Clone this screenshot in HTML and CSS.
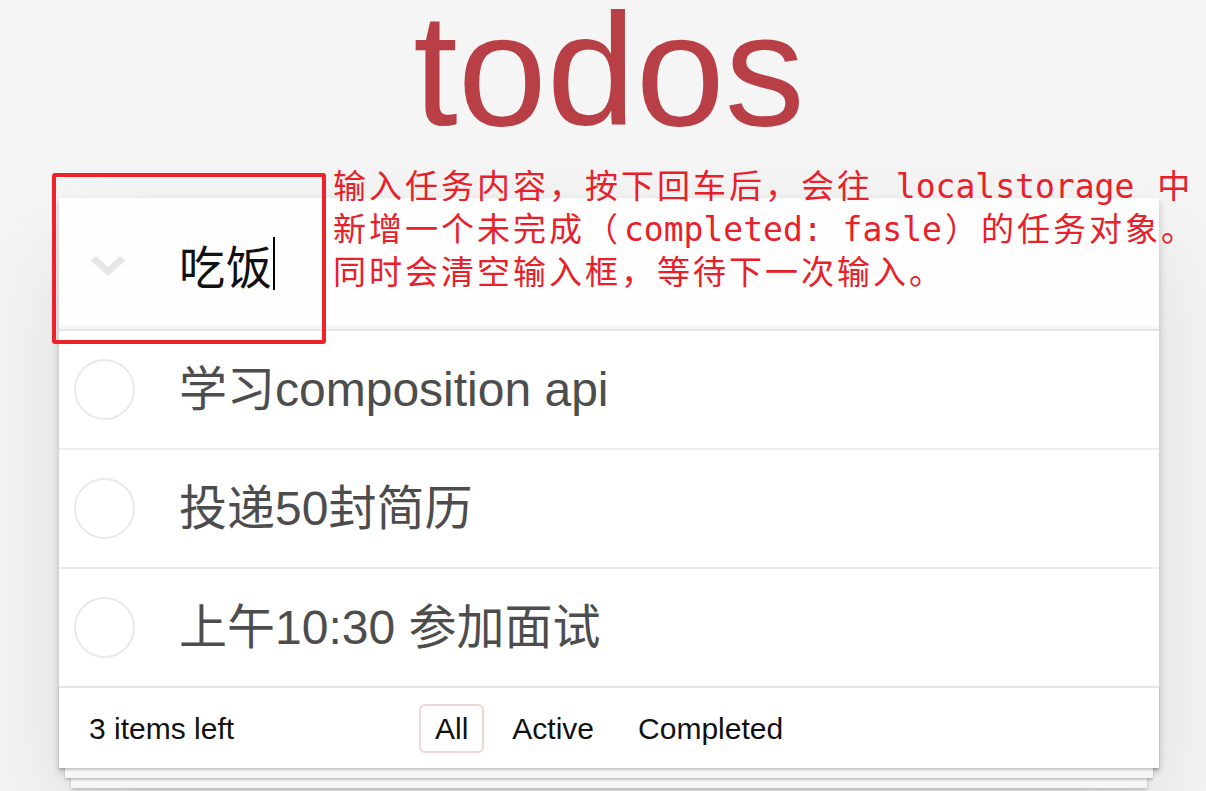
FILE: index.html
```html
<!DOCTYPE html>
<html lang="zh-CN">
<head>
<meta charset="utf-8">
<title>todos</title>
<link rel="stylesheet" href="styles.css">
</head>
<body>
<div class="page">
  <h1 class="title">todos</h1>
  <section class="todoapp">
    <header class="new-todo">
      <span class="toggle-all">
        <svg width="34" height="20" viewBox="0 0 34 20"><polygon points="0,5 5,0 17,11 29,0 34,5 17,20" fill="#e6e6e6"/></svg>
      </span>
      <span class="new-text">吃饭</span><span class="caret"></span>
    </header>
    <ul class="todo-list">
      <li class="todo">
        <span class="toggle"><svg width="61" height="61" viewBox="0 0 61 61"><circle cx="30.5" cy="30.5" r="29.5" fill="none" stroke="#e9e9e9" stroke-width="2"/></svg></span>
        <label class="todo-text">学习composition api</label>
      </li>
      <li class="todo">
        <span class="toggle"><svg width="61" height="61" viewBox="0 0 61 61"><circle cx="30.5" cy="30.5" r="29.5" fill="none" stroke="#e9e9e9" stroke-width="2"/></svg></span>
        <label class="todo-text">投递50封简历</label>
      </li>
      <li class="todo">
        <span class="toggle"><svg width="61" height="61" viewBox="0 0 61 61"><circle cx="30.5" cy="30.5" r="29.5" fill="none" stroke="#e9e9e9" stroke-width="2"/></svg></span>
        <label class="todo-text">上午10:30 参加面试</label>
      </li>
    </ul>
    <footer class="footer">
      <span class="count">3 items left</span>
      <ul class="filters">
        <li><a class="filter selected">All</a></li>
        <li><a class="filter">Active</a></li>
        <li><a class="filter">Completed</a></li>
      </ul>
    </footer>
  </section>
  <div class="highlight"></div>
  <p class="note">输入任务内容，按下回车后，会往<code class="mono"> localstorage </code>中<br>新增一个未完成（<code class="mono">completed: fasle</code>）的任务对象。<br>同时会清空输入框，等待下一次输入。</p>
</div>
</body>
</html>
```

FILE: styles.css
```css
html, body {
  margin: 0;
  padding: 0;
}

body {
  width: 1206px;
  height: 791px;
  overflow: hidden;
  background: #f5f5f5;
  font-family: "Liberation Sans", "Noto Sans CJK SC", sans-serif;
  color: #111;
}

.page {
  position: relative;
  width: 1100px;
  padding-left: 59px;
}

.title {
  margin: 0;
  height: 140px;
  font-size: 160px;
  line-height: 140px;
  font-weight: normal;
  color: #b83f45;
  text-align: center;
}

.todoapp {
  position: relative;
  margin-top: 58px;
  background: #fff;
  box-shadow: 0 4px 8px rgba(0, 0, 0, 0.2), 0 50px 100px rgba(0, 0, 0, 0.1);
}

.new-todo {
  display: flex;
  align-items: center;
  height: 131px;
  background: rgba(0, 0, 0, 0.003);
  box-shadow: inset 0 -4px 2px rgba(0, 0, 0, 0.03);
}

.toggle-all {
  flex: 0 0 120px;
  box-sizing: border-box;
  padding-left: 32px;
  padding-top: 5px;
  display: flex;
}

.new-text {
  font-family: "Noto Sans CJK SC", sans-serif;
  font-size: 46px;
  letter-spacing: 1px;
  line-height: 60px;
  color: #111;
}

.caret {
  display: inline-block;
  width: 2px;
  height: 53px;
  background: #000;
}

.todo-list {
  list-style: none;
  margin: 0;
  padding: 0;
  border-top: 2px solid #e6e6e6;
}

.todo {
  display: flex;
  align-items: center;
  border-bottom: 2px solid #ededed;
  font-size: 48px;
}

.todo:last-child {
  border-bottom: none;
}

.toggle {
  flex: 0 0 120px;
  box-sizing: border-box;
  padding-left: 15px;
  display: flex;
}

.todo-text {
  padding: 30px 30px 30px 0;
  line-height: 57px;
  color: #4d4d4d;
}

.footer {
  position: relative;
  display: flex;
  align-items: center;
  height: 40px;
  padding: 20px 30px;
  border-top: 2px solid #e6e6e6;
  font-size: 30px;
  color: #111;
}

.footer::before {
  content: "";
  position: absolute;
  left: 0;
  right: 0;
  bottom: 0;
  height: 82px;
  box-shadow: 0 2px 2px rgba(0, 0, 0, 0.2),
              0 16px 0 -6px #f6f6f6,
              0 18px 2px -6px rgba(0, 0, 0, 0.2),
              0 32px 0 -12px #f6f6f6,
              0 34px 4px -12px rgba(0, 0, 0, 0.2);
}

.count {
  position: relative;
  flex: 0 0 324px;
  line-height: 33px;
}

.filters {
  position: relative;
  display: flex;
  list-style: none;
  margin: 0;
  padding: 0;
}

.filter {
  display: block;
  margin: 0 6px;
  padding: 6px 14px;
  border: 2px solid transparent;
  border-radius: 6px;
  line-height: 33px;
  color: #111;
}

.filter.selected {
  border-color: rgba(175, 47, 47, 0.2);
}

.highlight {
  position: absolute;
  left: 52px;
  top: 173px;
  width: 274px;
  height: 171px;
  box-sizing: border-box;
  border: 4px solid #ee2229;
  border-radius: 3px;
}

.note {
  position: absolute;
  left: 333px;
  top: 163px;
  margin: 0;
  font-family: "Noto Sans CJK SC", sans-serif;
  font-size: 33px;
  letter-spacing: 3px;
  line-height: 43px;
  color: #e8202a;
  white-space: nowrap;
}

.mono {
  font-family: "DejaVu Sans Mono", monospace;
  font-size: 33px;
  letter-spacing: 0;
  line-height: 20px;
  padding: 0 3px;
}
```
